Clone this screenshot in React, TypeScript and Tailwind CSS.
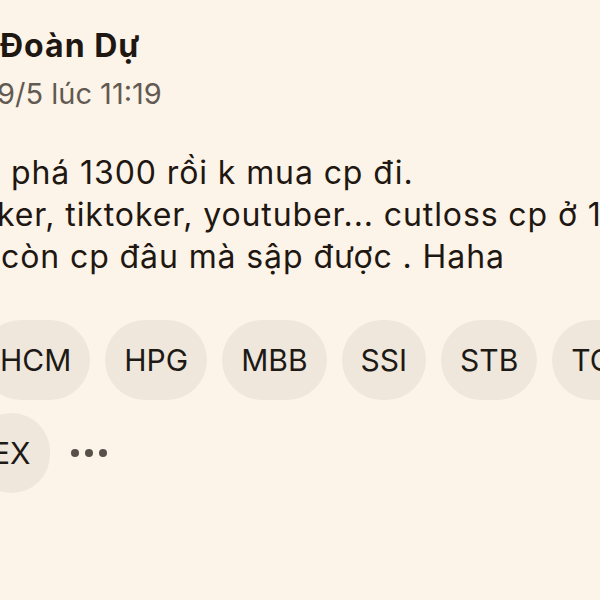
import React from "react";

const chipsRow1 = ["HCM", "HPG", "MBB", "SSI", "STB", "TCB"];

function Chip({ label, className = "" }: { label: string; className?: string }) {
  return (
    <div
      className={`flex h-[80px] shrink-0 items-center justify-center rounded-full bg-[#efe7dc] px-[19px] text-[30px] text-[#1d1915] ${className}`}
    >
      {label}
    </div>
  );
}

export default function App() {
  return (
    <div
      className="h-[600px] w-[600px] overflow-hidden bg-[#fdf4e9]"
      style={{ fontFamily: "Inter, 'Noto Sans', sans-serif" }}
    >
      <div className="flex flex-col pt-[25px]">
        <div className="whitespace-nowrap text-[32px] font-bold leading-[42px] tracking-[1px] text-[#1f1711]">
          Đoàn Dự
        </div>
        <div className="-ml-[3px] mt-[9px] whitespace-nowrap text-[29px] leading-[36px] text-[#625a52]">
          9/5 lúc 11:19
        </div>

        <div className="mt-[40px] flex flex-col whitespace-nowrap text-[32px] leading-[42px] tracking-[0.9px] text-[#1f1711]">
          <div className="pl-[11px]">phá 1300 rồi k mua cp đi.</div>
          <div className="-ml-[3px]">ker, tiktoker, youtuber... cutloss cp ở 1300</div>
          <div className="pl-[1px]">còn cp đâu mà sập được . Haha</div>
        </div>

        <div className="mt-[42px] flex flex-col gap-[13px]">
          <div className="-ml-[19px] flex gap-[15px]">
            {chipsRow1.map((c) => (
              <Chip key={c} label={c} />
            ))}
          </div>
          <div className="flex items-center gap-[21px]">
            <Chip label="EX" className="-ml-[27px]" />
            <div className="flex items-center gap-[6px]">
              <span className="h-[8px] w-[8px] rounded-full bg-[#58504a]" />
              <span className="h-[8px] w-[8px] rounded-full bg-[#58504a]" />
              <span className="h-[8px] w-[8px] rounded-full bg-[#58504a]" />
            </div>
          </div>
        </div>
      </div>
    </div>
  );
}
